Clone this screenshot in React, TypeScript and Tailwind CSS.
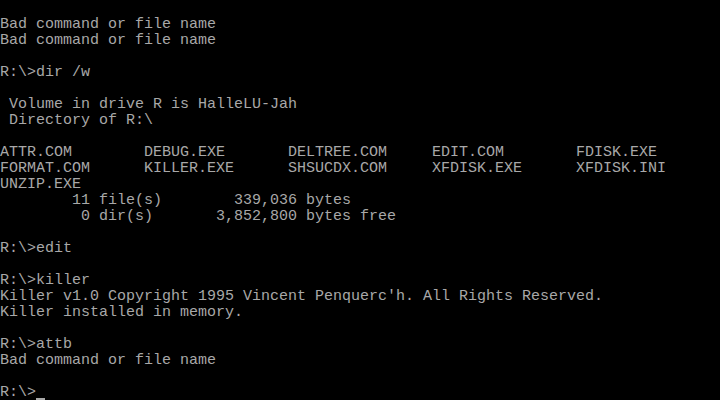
import React from "react";

const lines: string[] = [
	"",
	"Bad command or file name",
	"Bad command or file name",
	"",
	"R:\\>dir /w",
	"",
	" Volume in drive R is HalleLU-Jah",
	" Directory of R:\\",
	"",
	"ATTR.COM        DEBUG.EXE       DELTREE.COM     EDIT.COM        FDISK.EXE",
	"FORMAT.COM      KILLER.EXE      SHSUCDX.COM     XFDISK.EXE      XFDISK.INI",
	"UNZIP.EXE",
	"        11 file(s)        339,036 bytes",
	"         0 dir(s)       3,852,800 bytes free",
	"",
	"R:\\>edit",
	"",
	"R:\\>killer",
	"Killer v1.0 Copyright 1995 Vincent Penquerc'h. All Rights Reserved.",
	"Killer installed in memory.",
	"",
	"R:\\>attb",
	"Bad command or file name",
	"",
];

const App = () => {
	return (
		<div className="w-[720px] h-[400px] bg-black overflow-hidden text-[#a8a8a8] font-['Liberation_Mono',monospace] text-[15px] leading-4">
			{lines.map((line, index) => (
				<div className="h-4 pt-px whitespace-pre" key={index}>
					{line}
				</div>
			))}
			<div className="h-4 flex whitespace-pre">
				<span className="pt-px">R:\&gt;</span>
				<span className="w-[9px] h-[2px] self-end bg-[#a8a8a8]" />
			</div>
		</div>
	);
};

export default App;
